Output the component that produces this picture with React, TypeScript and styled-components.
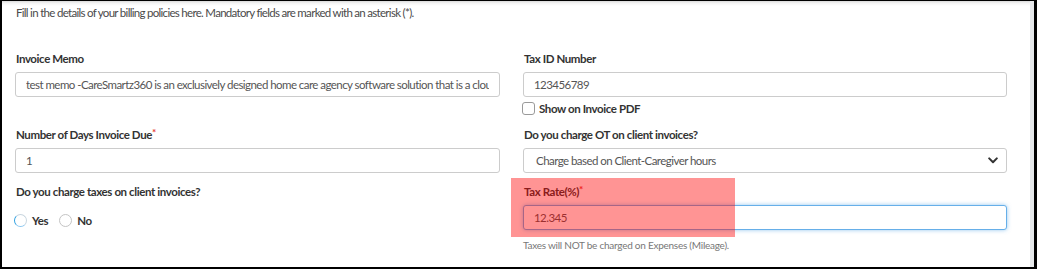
import React from "react";
import styled, { createGlobalStyle, css } from "styled-components";

const GlobalStyle = createGlobalStyle`
  html, body { margin: 0; padding: 0; background: #fff; }
  body { font-family: Lato, "Open Sans", Arial, sans-serif; }
  * { box-sizing: border-box; }
`;

const Frame = styled.div`
  width: 1037px;
  height: 269px;
  border-style: solid;
  border-color: #000;
  border-width: 1px 3px 2px 2px;
  display: flex;
  overflow: hidden;
`;

const Content = styled.div`
  flex: 1;
  position: relative;
  padding: 3px 0 0 13px;
  background: linear-gradient(#d9d9d9 0px, #f3f3f3 2px, #ffffff 5px);
`;

const ScrollStrip = styled.div`
  width: 4px;
  background: #e6e8ea;
`;

const Intro = styled.p`
  margin: 0 0 29px 1px;
  font-size: 11.5px;
  letter-spacing: -0.7px;
  line-height: 17px;
  color: #4a4a4a;
`;

const Row = styled.div<{ $mb: number }>`
  display: grid;
  grid-template-columns: 485px 484px;
  column-gap: 23px;
  align-items: start;
  margin-bottom: ${(p) => p.$mb}px;
`;

const Field = styled.div`
  position: relative;
  display: flex;
  flex-direction: column;
`;

const Label = styled.label`
  font-size: 11.5px;
  letter-spacing: -0.4px;
  line-height: 17px;
  font-weight: 700;
  color: #333;
  margin: 0 0 5px 1px;
`;

const Req = styled.span`
  color: #e53935;
  font-size: 10px;
  vertical-align: top;
  line-height: 12px;
`;

const inputBase = css`
  height: 25px;
  width: 100%;
  border: 1px solid #ccc;
  border-radius: 3px;
  background: #fff;
  font-family: Lato, "Open Sans", Arial, sans-serif;
  font-size: 11.5px;
  letter-spacing: -0.55px;
  color: #555;
  display: flex;
  align-items: center;
  white-space: nowrap;
  overflow: hidden;
`;

const Input = styled.div<{ $focus?: boolean }>`
  ${inputBase}
  padding: 0 10px;
  ${(p) =>
    p.$focus &&
    css`
      border-color: #66afe9;
      box-shadow: 0 0 4px rgba(102, 175, 233, 0.7);
    `}
`;

const InputText = styled.span`
  overflow: hidden;
  white-space: nowrap;
`;

const Select = styled.div`
  ${inputBase}
  padding: 0 8px 0 12px;
  justify-content: space-between;
`;

const CheckRow = styled.div`
  display: flex;
  align-items: center;
  height: 18px;
  margin-top: 2px;
  gap: 4px;
`;

const Checkbox = styled.span`
  width: 13px;
  height: 13px;
  border: 1px solid #9a9a9a;
  border-radius: 3px;
  background: #fff;
  margin-left: -1px;
`;

const InlineLabel = styled.span`
  font-size: 11.5px;
  letter-spacing: -0.4px;
  font-weight: 700;
  color: #333;
`;

const RadioRow = styled.div`
  display: flex;
  align-items: center;
  height: 18px;
  margin-top: 6px;
  margin-left: -1px;
`;

const RadioItem = styled.span`
  display: inline-flex;
  align-items: center;
  gap: 5px;
  margin-right: 11px;
`;

const Radio = styled.span<{ $focus?: boolean }>`
  width: 13px;
  height: 13px;
  border-radius: 50%;
  border: 1px solid #c4c4c4;
  background: #fff;
  ${(p) =>
    p.$focus &&
    css`
      border-color: #c9d6df #c9d6df #8cc7ef #2b9ee0;
    `}
`;

const Help = styled.div`
  margin-top: 8px;
  font-size: 10px;
  letter-spacing: -0.25px;
  line-height: 14px;
  color: #777;
`;

const Highlight = styled.div`
  position: absolute;
  left: -12px;
  top: -5px;
  width: 224px;
  height: 59px;
  background: rgba(255, 0, 0, 0.42);
  pointer-events: none;
`;

const Chevron = () => (
  <svg width="10" height="7" viewBox="0 0 10 7">
    <path d="M1.2 1.4 L5 5.2 L8.8 1.4" fill="none" stroke="#333" strokeWidth="2" strokeLinecap="round" strokeLinejoin="round" />
  </svg>
);

export default function App() {
  return (
    <>
      <GlobalStyle />
      <Frame>
        <Content>
          <Intro>
            Fill in the details of your billing policies here. Mandatory fields are marked with an asterisk (*).
          </Intro>
          <Row $mb={9}>
            <Field>
              <Label>Invoice Memo</Label>
              <Input>
                <InputText>
                  test memo -CareSmartz360 is an exclusively designed home care agency software solution that is a cloud based
                </InputText>
              </Input>
            </Field>
            <Field>
              <Label>Tax ID Number</Label>
              <Input>123456789</Input>
              <CheckRow>
                <Checkbox />
                <InlineLabel>Show on Invoice PDF</InlineLabel>
              </CheckRow>
            </Field>
          </Row>
          <Row $mb={10}>
            <Field>
              <Label>
                Number of Days Invoice Due<Req>*</Req>
              </Label>
              <Input>1</Input>
            </Field>
            <Field>
              <Label>Do you charge OT on client invoices?</Label>
              <Select>
                <span>Charge based on Client-Caregiver hours</span>
                <Chevron />
              </Select>
            </Field>
          </Row>
          <Row $mb={0}>
            <Field>
              <Label>Do you charge taxes on client invoices?</Label>
              <RadioRow>
                <RadioItem>
                  <Radio $focus />
                  <InlineLabel>Yes</InlineLabel>
                </RadioItem>
                <RadioItem>
                  <Radio />
                  <InlineLabel>No</InlineLabel>
                </RadioItem>
              </RadioRow>
            </Field>
            <Field>
              <Label>
                Tax Rate(%)<Req>*</Req>
              </Label>
              <Input $focus>12.345</Input>
              <Help>Taxes will NOT be charged on Expenses (Mileage).</Help>
              <Highlight />
            </Field>
          </Row>
        </Content>
        <ScrollStrip />
      </Frame>
    </>
  );
}
